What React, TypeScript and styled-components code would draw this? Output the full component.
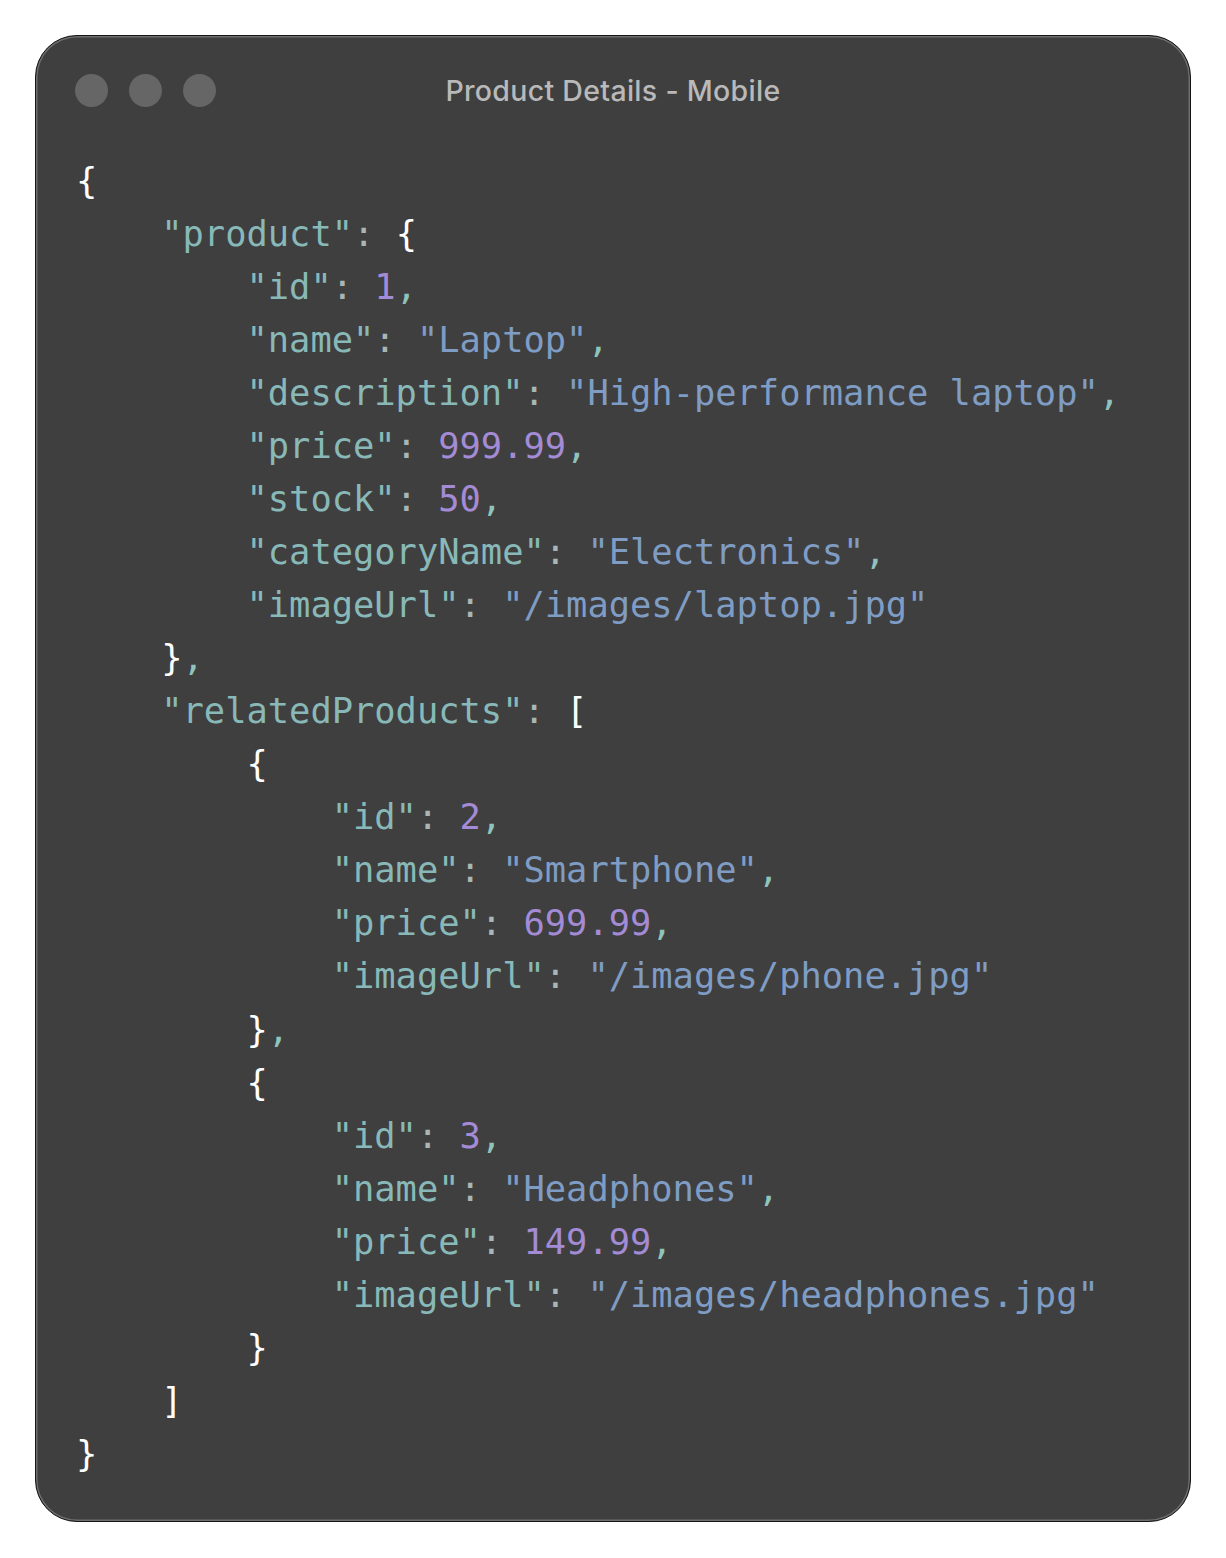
import React from "react";
import styled, { createGlobalStyle } from "styled-components";

const Global = createGlobalStyle`
  html, body { margin: 0; padding: 0; background: #ffffff; }
  #root { width: 1226px; }
`;

const Page = styled.div`
  padding: 35px 35px 36px 35px;
  box-sizing: border-box;
  width: 1226px;
`;

const Window = styled.div`
  box-sizing: border-box;
  width: 1156px;
  height: 1487px;
  background: #3f3f3f;
  border: 1px solid #151515;
  border-radius: 42px;
  box-shadow: inset 0 0 0 1.5px #6e6e6e;
  display: flex;
  flex-direction: column;
  overflow: hidden;
`;

const TitleBar = styled.div`
  display: grid;
  grid-template-columns: 1fr auto 1fr;
  align-items: center;
  height: 34px;
  margin-top: 37px;
  padding: 0 39px;
`;

const Dots = styled.div`
  display: flex;
  gap: 21px;
`;

const Dot = styled.span`
  width: 33px;
  height: 33px;
  border-radius: 50%;
  background: #666666;
`;

const Title = styled.div`
  font-family: Inter, "Noto Sans", sans-serif;
  font-size: 28.5px;
  font-weight: 500;
  color: #b9b9b9;
  letter-spacing: 0.3px;
  white-space: nowrap;
`;

const Code = styled.pre`
  margin: 47px 0 0 0;
  padding: 0 0 0 40px;
  font-family: "DejaVu Sans Mono", "Liberation Mono", monospace;
  font-size: 35.4px;
  line-height: 53.04px;
  color: #ffffff;
`;

const Line = styled.div`
  white-space: pre;
  height: 53.04px;
`;

type Kind = "key" | "str" | "num" | "punc" | "colon" | "comma" | "plain";

const colors: Record<Kind, string> = {
  key: "#88b9b8",
  str: "#7f9dc4",
  num: "#a48bd6",
  punc: "#ffffff",
  colon: "#a9b6b6",
  comma: "#8ec4bd",
  plain: "#ffffff",
};

const Tok = styled.span<{ $kind: Kind }>`
  color: ${(p) => colors[p.$kind]};
`;

type T = [Kind, string];

const kv = (indent: number, key: string, val: T, comma: boolean): T[] => {
  const out: T[] = [
    ["plain", "    ".repeat(indent)],
    ["key", `"${key}"`],
    ["colon", ": "],
    val,
  ];
  if (comma) out.push(["comma", ","]);
  return out;
};

const lines: T[][] = [
  [["punc", "{"]],
  [["plain", "    "], ["key", '"product"'], ["colon", ": "], ["punc", "{"]],
  kv(2, "id", ["num", "1"], true),
  kv(2, "name", ["str", '"Laptop"'], true),
  kv(2, "description", ["str", '"High-performance laptop"'], true),
  kv(2, "price", ["num", "999.99"], true),
  kv(2, "stock", ["num", "50"], true),
  kv(2, "categoryName", ["str", '"Electronics"'], true),
  kv(2, "imageUrl", ["str", '"/images/laptop.jpg"'], false),
  [["plain", "    "], ["punc", "}"], ["comma", ","]],
  [["plain", "    "], ["key", '"relatedProducts"'], ["colon", ": "], ["punc", "["]],
  [["plain", "        "], ["punc", "{"]],
  kv(3, "id", ["num", "2"], true),
  kv(3, "name", ["str", '"Smartphone"'], true),
  kv(3, "price", ["num", "699.99"], true),
  kv(3, "imageUrl", ["str", '"/images/phone.jpg"'], false),
  [["plain", "        "], ["punc", "}"], ["comma", ","]],
  [["plain", "        "], ["punc", "{"]],
  kv(3, "id", ["num", "3"], true),
  kv(3, "name", ["str", '"Headphones"'], true),
  kv(3, "price", ["num", "149.99"], true),
  kv(3, "imageUrl", ["str", '"/images/headphones.jpg"'], false),
  [["plain", "        "], ["punc", "}"]],
  [["plain", "    "], ["punc", "]"]],
  [["punc", "}"]],
];

export default function App() {
  return (
    <>
      <Global />
      <Page>
        <Window>
          <TitleBar>
            <Dots>
              <Dot />
              <Dot />
              <Dot />
            </Dots>
            <Title>Product Details - Mobile</Title>
            <div />
          </TitleBar>
          <Code>
            {lines.map((ln, i) => (
              <Line key={i}>
                {ln.map(([k, t], j) => (
                  <Tok key={j} $kind={k}>
                    {t}
                  </Tok>
                ))}
              </Line>
            ))}
          </Code>
        </Window>
      </Page>
    </>
  );
}
